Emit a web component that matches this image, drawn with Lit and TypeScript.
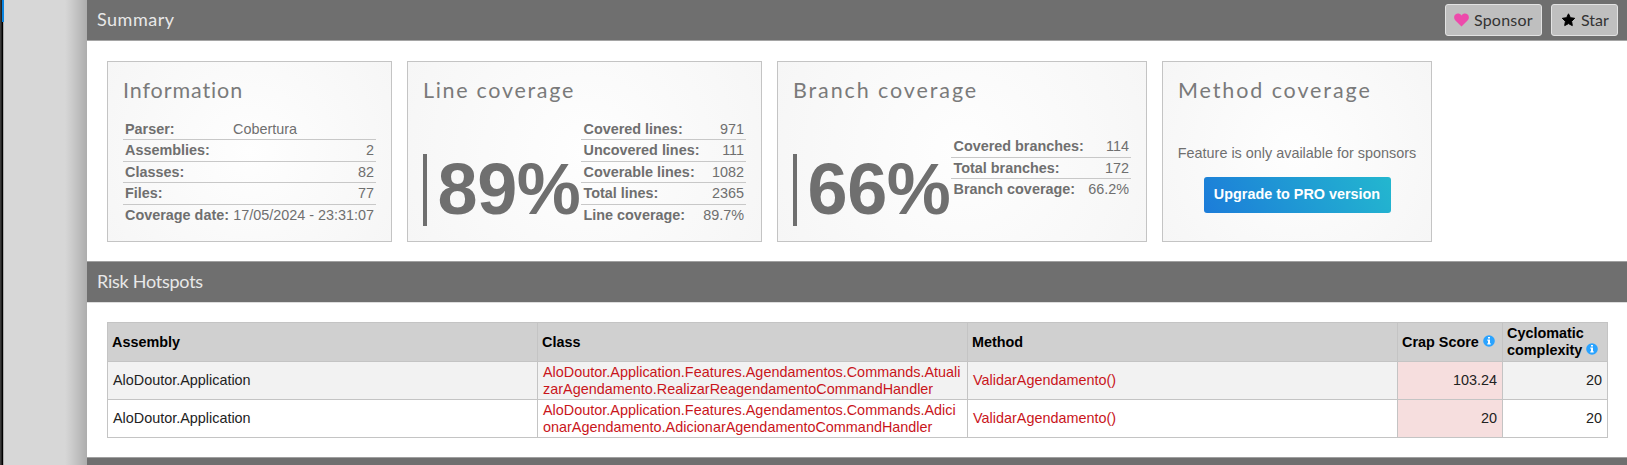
import { LitElement, html, css } from "lit";
import { customElement, property } from "lit/decorators.js";

type Row = [string, string];

@customElement("info-icon")
class InfoIcon extends LitElement {
  static styles = css`
    :host { display: inline-block; width: 12px; height: 12px; margin-left: 4px; vertical-align: 0; }
    svg { display: block; }
  `;
  render() {
    return html`<svg width="12" height="12" viewBox="0 0 12 12">
      <circle cx="6" cy="6" r="5.8" fill="#2aa3ff" />
      <path fill="#fff" d="M5 1.9h2v1.7H5zM4.3 4.6H7v3.7h.7v1.2H4.3V8.3H5V5.8h-.7z" />
    </svg>`;
  }
}

@customElement("summary-card")
class SummaryCard extends LitElement {
  @property() heading = "";
  @property() percent = "";
  @property({ attribute: false }) rows: Row[] = [];
  static styles = css`
    :host {
      box-sizing: border-box; display: flex; flex-direction: column; height: 181px;
      padding: 12px 15px 0; border: 1px solid #c4c4c4; color: #6f6f6f;
      background: radial-gradient(circle, #fefefe, #f6f6f6);
    }
    .title { font: 400 21.5px/32px Lato, sans-serif; white-space: nowrap; letter-spacing: var(--title-spacing, 1px); color: #7a7a7a; }
    .body { display: flex; margin-top: 12px; height: 108px; }
    .percent {
      box-sizing: border-box; align-self: flex-end; height: 72px; width: 158px; flex: none;
      border-left: 4px solid #6f6f6f; padding-left: 10.5px; font-size: 72px; line-height: 70px; font-weight: bold;
      white-space: nowrap; letter-spacing: -0.4px;
    }
    .rows { flex: 1; align-self: center; padding-top: 1px; }
    .row {
      box-sizing: border-box; height: 21.6px; display: flex; justify-content: space-between;
      padding: 0 2px; line-height: 20.6px; border-bottom: 1px solid #c8c8c8; white-space: nowrap;
    }
    .percent + .rows .label { padding-left: 0.5px; }
    .row:last-child { border-bottom: 0; }
    .label { font-weight: bold; }
    .value.left { width: 141px; }
    .short { padding-bottom: 8px; }
  `;
  render() {
    return html`
      <div class="title">${this.heading}</div>
      <slot>
        <div class="body">
          ${this.percent ? html`<div class="percent">${this.percent}</div>` : ""}
          <div class="rows ${this.rows.length < 5 ? "short" : ""}">
            ${this.rows.map(
              ([label, value]) => html`<div class="row">
                <span class="label">${label}</span>
                <span class="value ${value === "Cobertura" ? "left" : ""}">${value}</span>
              </div>`
            )}
          </div>
        </div>
      </slot>`;
  }
}

@customElement("app-root")
class AppRoot extends LitElement {
  static styles = css`
    :host {
      display: flex; height: 465px; overflow: hidden; background: #d7d7d7;
      font: 14.4px/16.6px "Liberation Sans", Arial, sans-serif; color: #222;
    }
    .edge { width: 4px; flex: none; background: linear-gradient(90deg, #3a3a3a 0 1px, #222 1px 2px, #000 2px 3px, #aaa 3px); }
    .accent { width: 2px; height: 22px; margin-left: 2px; background: #0a84e0; }
    .gutter { width: 83px; flex: none; background: linear-gradient(90deg, #d7d7d7 61px, #cdcdcd 67px, #bdbdbd 75px, #adadad 83px); }
    .page { flex: 1; min-width: 0; background: #fff; }
    .bar {
      box-sizing: border-box; height: 41px; display: flex; align-items: center; padding: 0 9px 0 10px;
      background: #6f6f6f; border-bottom: 1px solid #a5a5a5; color: #e8e8e8;
      font: 400 18px/40px Lato, sans-serif;
    }
    .bar.lower { height: 42px; border-top: 1px solid #a0a0a0; border-bottom-color: #ddd; }
    .name { flex: 1; padding-bottom: 1px; line-height: 36px; }
    .name.summary { letter-spacing: 0.5px; padding-bottom: 2px; }
    .lower .name { padding-bottom: 2px; letter-spacing: -0.25px; }
    .button {
      box-sizing: border-box; height: 32px; display: flex; align-items: center; border: 1px solid #e2e2e2;
      border-radius: 3px; background: #bfbfbf; color: #333; font: 400 16px/30px Lato, sans-serif;
      padding: 0 8px; margin-left: 9px;
    }
    .button svg { flex: none; margin-right: 5px; }
    .sponsor { width: 97px; letter-spacing: 0.2px; }
    .star { width: 67px; padding-left: 9px; }
    .cards { display: flex; gap: 15px; padding: 20px 20px 20px; height: 180px; }
    .info { width: 285px; --title-spacing: 0.9px; }
    .line { width: 355px; --title-spacing: 1.7px; }
    .branch { width: 370px; --title-spacing: 1.9px; }
    .method { width: 270px; --title-spacing: 1.9px; }
    .feature { display: flex; flex-direction: column; align-items: center; padding-top: 39px; gap: 15px; white-space: nowrap; }
    .upgrade {
      box-sizing: border-box; width: 187px; height: 36px; border-radius: 3px; text-align: center;
      line-height: 35px; color: #fff; font-weight: bold;
      background: linear-gradient(60deg, #1c7cd9, #23b7cf);
    }
    .table {
      display: grid; grid-template-columns: 430px 430px 430px 105px 105px; grid-template-rows: 39px 38px 38px;
      margin: 19px 0 19px 20px; width: 1500px; border: solid #c4c4c4; border-width: 1px 0 0 1px;
    }
    .cell {
      box-sizing: border-box; display: flex; align-items: center; padding: 0 5px;
      border: solid #c4c4c4; border-width: 0 1px 1px 0; white-space: nowrap;
    }
    .head { background: #d0d0d0; color: #000; font-weight: bold; padding: 0 4px; }
    .odd { background: #f2f2f2; }
    .num { justify-content: flex-end; }
    .bad { background: #f6dede; }
    .link { color: #c9151b; letter-spacing: 0.012px; }
  `;

  render() {
    const entries = [
      ["Atuali", "zarAgendamento.RealizarReagendamentoCommandHandler", "103.24"],
      ["Adici", "onarAgendamento.AdicionarAgendamentoCommandHandler", "20"],
    ];
    return html`
      <div class="edge"><div class="accent"></div></div>
      <div class="gutter"></div>
      <main class="page">
        <div class="bar">
          <span class="name summary">Summary</span>
          <div class="button sponsor">
            <svg width="15" height="14" viewBox="0 0 15 14">
              <path fill="#ed4aab" d="M7.5 13.4 1.2 7.2C-.3 5.7-.2 2.8 1.4 1.4 3.2-.1 5.9.2 7.5 2.4 9.1.2 11.8-.1 13.6 1.4c1.6 1.4 1.7 4.3.2 5.8z" />
            </svg>
            <span>Sponsor</span>
          </div>
          <div class="button star">
            <svg width="15" height="14" viewBox="0 0 15 14">
              <path fill="#000" stroke="#000" stroke-linejoin="round" d="m7.5.8 1.9 3.9 4.3.6-3.1 3 .7 4.3-3.8-2-3.8 2 .7-4.3-3.1-3 4.3-.6z" />
            </svg>
            <span>Star</span>
          </div>
        </div>
        <div class="cards">
          <summary-card class="info" heading="Information" .rows=${[
            ["Parser:", "Cobertura"], ["Assemblies:", "2"], ["Classes:", "82"], ["Files:", "77"],
            ["Coverage date:", "17/05/2024 - 23:31:07"],
          ]}></summary-card>
          <summary-card class="line" heading="Line coverage" percent="89%" .rows=${[
            ["Covered lines:", "971"], ["Uncovered lines:", "111"], ["Coverable lines:", "1082"],
            ["Total lines:", "2365"], ["Line coverage:", "89.7%"],
          ]}></summary-card>
          <summary-card class="branch" heading="Branch coverage" percent="66%" .rows=${[
            ["Covered branches:", "114"], ["Total branches:", "172"], ["Branch coverage:", "66.2%"],
          ]}></summary-card>
          <summary-card class="method" heading="Method coverage">
            <div class="feature"><span>Feature is only available for sponsors</span><div class="upgrade">Upgrade to PRO version</div></div>
          </summary-card>
        </div>
        <div class="bar lower"><span class="name">Risk Hotspots</span></div>
        <div class="table">
          <div class="cell head">Assembly</div>
          <div class="cell head">Class</div>
          <div class="cell head">Method</div>
          <div class="cell head"><span>Crap Score<info-icon></info-icon></span></div>
          <div class="cell head"><span>Cyclomatic<br />complexity<info-icon></info-icon></span></div>
          ${entries.map(([tail, rest, score], i) => {
            const odd = i === 0 ? "odd" : "";
            return html`
              <div class="cell ${odd}">AloDoutor.Application</div>
              <div class="cell link ${odd}"><span>AloDoutor.Application.Features.Agendamentos.Commands.${tail}<br />${rest}</span></div>
              <div class="cell link ${odd}">ValidarAgendamento()</div>
              <div class="cell num bad">${score}</div>
              <div class="cell num ${odd}">20</div>`;
          })}
        </div>
        <div class="bar lower"></div>
      </main>`;
  }
}
